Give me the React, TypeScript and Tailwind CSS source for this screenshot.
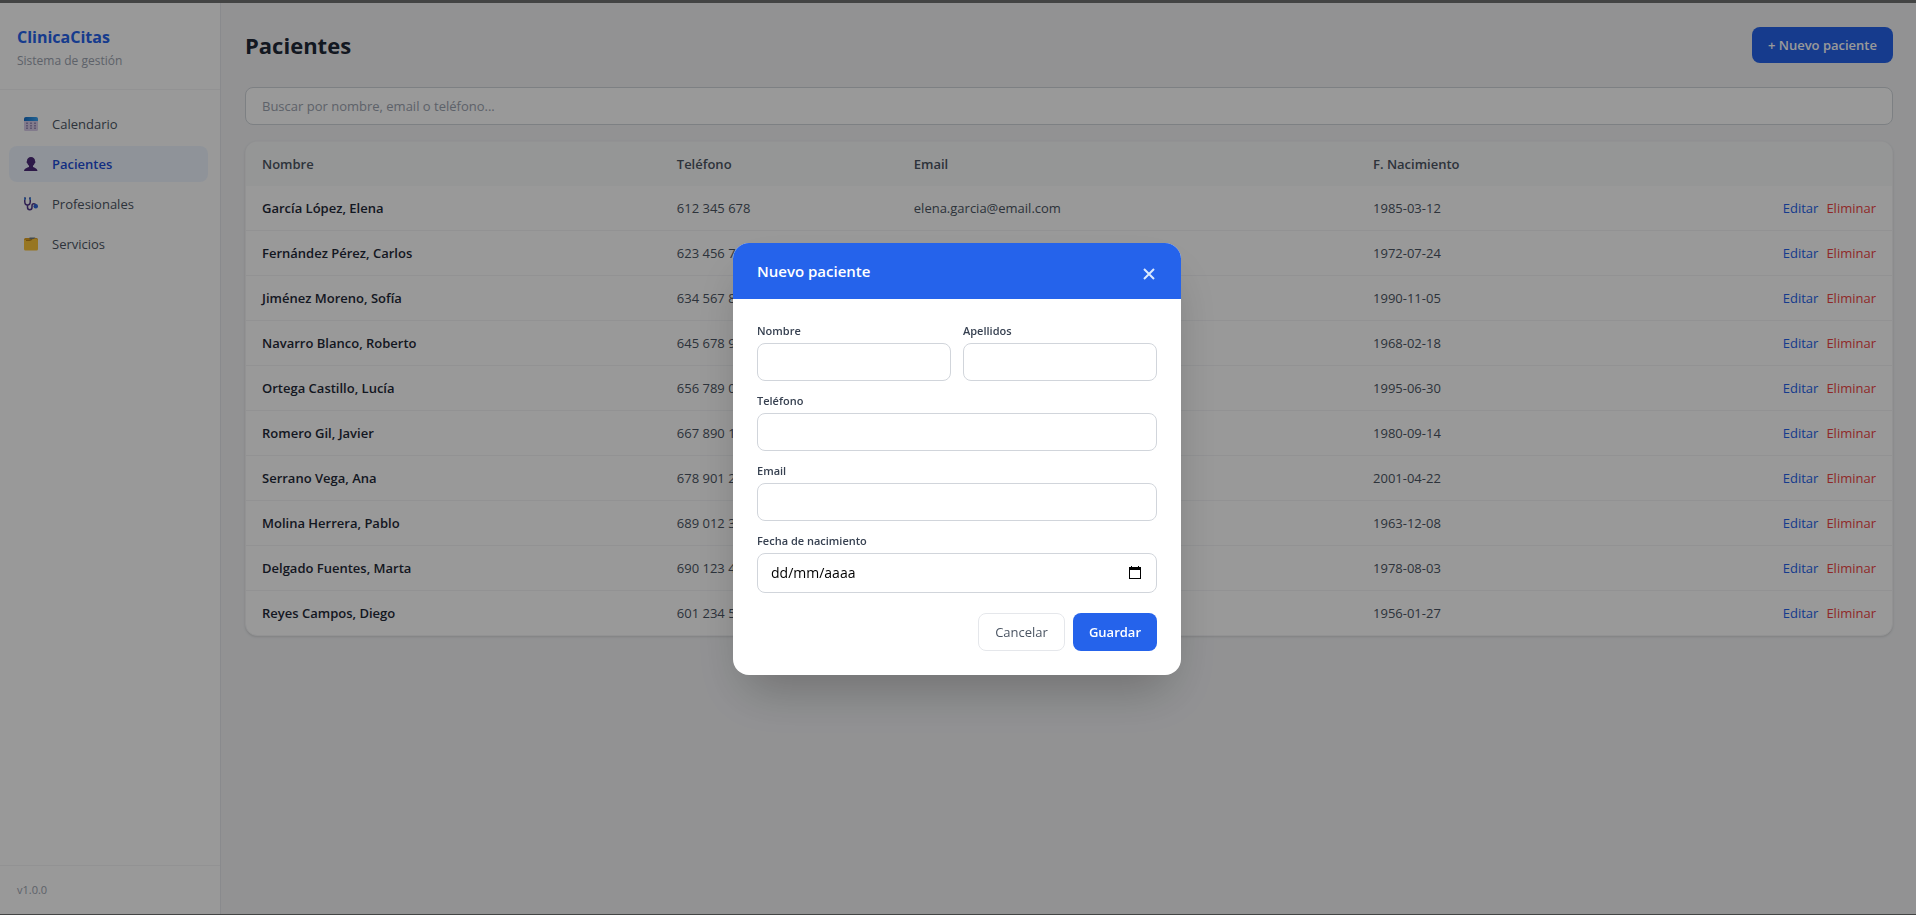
import React, { useState } from 'react';

interface Patient {
  id: number;
  name: string;
  phone: string;
  email: string;
  birth: string;
}

const patients: Patient[] = [
  { id: 1, name: 'García López, Elena', phone: '612 345 678', email: 'elena.garcia@email.com', birth: '1985-03-12' },
  { id: 2, name: 'Fernández Pérez, Carlos', phone: '623 456 789', email: 'carlos.f@email.com', birth: '1972-07-24' },
  { id: 3, name: 'Jiménez Moreno, Sofía', phone: '634 567 890', email: 'sofia.j@email.com', birth: '1990-11-05' },
  { id: 4, name: 'Navarro Blanco, Roberto', phone: '645 678 901', email: 'roberto.n@email.com', birth: '1968-02-18' },
  { id: 5, name: 'Ortega Castillo, Lucía', phone: '656 789 012', email: 'lucia.o@email.com', birth: '1995-06-30' },
  { id: 6, name: 'Romero Gil, Javier', phone: '667 890 123', email: 'javier.r@email.com', birth: '1980-09-14' },
  { id: 7, name: 'Serrano Vega, Ana', phone: '678 901 234', email: 'ana.s@email.com', birth: '2001-04-22' },
  { id: 8, name: 'Molina Herrera, Pablo', phone: '689 012 345', email: 'pablo.m@email.com', birth: '1963-12-08' },
  { id: 9, name: 'Delgado Fuentes, Marta', phone: '690 123 456', email: 'marta.d@email.com', birth: '1978-08-03' },
  { id: 10, name: 'Reyes Campos, Diego', phone: '601 234 567', email: 'diego.r@email.com', birth: '1956-01-27' },
];

function CalendarIcon() {
  return (
    <svg width="14" height="14" viewBox="0 0 28 28" aria-hidden="true">
      <defs>
        <linearGradient id="cal-top" x1="0" x2="1">
          <stop offset="0" stopColor="#1570c8" />
          <stop offset="1" stopColor="#3ba6f5" />
        </linearGradient>
      </defs>
      <rect x="0" y="1" width="28" height="27" rx="3" fill="#d9cdea" />
      <path d="M0 8V4a4 4 0 0 1 4-4h20a4 4 0 0 1 4 4v4z" fill="url(#cal-top)" />
      <g fill="#9c90bb">
        <rect x="4" y="11" width="4" height="3" />
        <rect x="12" y="11" width="4" height="3" />
        <rect x="20" y="11" width="4" height="3" />
        <rect x="4" y="16" width="4" height="3" />
        <rect x="12" y="16" width="4" height="3" />
        <rect x="20" y="16" width="4" height="3" />
        <rect x="4" y="21" width="4" height="3" />
        <rect x="12" y="21" width="4" height="3" />
        <rect x="20" y="21" width="4" height="3" />
      </g>
    </svg>
  );
}

function PersonIcon() {
  return (
    <svg width="14" height="14" viewBox="0 0 28 28" aria-hidden="true">
      <path
        d="M14 0C9 0 6 3.500 6 7.500c0 1-1 1.500-.8 3 .2 1.300 1.300 1.500 1.600 2.500.5 2 1.900 3.500 3.200 4.500v2c0 1.500-9.500 2-10 8.500h27c-.5-6.500-9-7-9-8.500v-2c1.300-1 2.700-2.500 3.200-4.500.3-1 1.400-1.200 1.600-2.500.2-1.500-.8-2-.8-3C22 3.500 19 0 14 0z"
        fill="#4b2a78"
      />
    </svg>
  );
}

function StethoscopeIcon() {
  return (
    <svg width="14" height="14" viewBox="0 0 28 28" fill="none" aria-hidden="true">
      <path d="M4 2.500H1.500V9c0 4 2.500 7 5.500 7s5.500-3 5.500-7V2.500H10" stroke="#51378a" strokeWidth="3" />
      <path
        d="M7 16v4.500c0 3.500 2 5 4.500 5s4.500-1.500 4.500-5v-3c0-2.500 1.500-4 3.500-4s4 1.500 4 4"
        stroke="#51378a"
        strokeWidth="3"
      />
      <path d="M1.500 1v5M12.500 1v5" stroke="#3a86e0" strokeWidth="3" />
      <circle cx="23.500" cy="18.500" r="4.500" fill="#2f63d8" />
    </svg>
  );
}

function FolderIcon() {
  return (
    <svg width="14" height="14" viewBox="0 0 28 28" aria-hidden="true">
      <path d="M0 5a3 3 0 0 1 3-3h22a3 3 0 0 1 3 3v18H0z" fill="#e0a022" />
      <path d="M11 1h12l-5 4h-7z" fill="#6f7a80" />
      <path d="M0 6h12c4 0 4-2 7-2h6a3 3 0 0 1 3 3v17a3 3 0 0 1-3 3H3a3 3 0 0 1-3-3z" fill="#fcc53a" />
      <path d="M4 7h8l4-2" stroke="#a86d0c" strokeWidth="1.500" fill="none" />
    </svg>
  );
}

const navItems = [
  { label: 'Calendario', icon: CalendarIcon, active: false },
  { label: 'Pacientes', icon: PersonIcon, active: true },
  { label: 'Profesionales', icon: StethoscopeIcon, active: false },
  { label: 'Servicios', icon: FolderIcon, active: false },
];

function Sidebar() {
  return (
    <aside className="flex w-[221px] shrink-0 flex-col border-r border-[#e5e7eb] bg-white">
      <div className="border-b border-[#f3f4f6] py-5 pl-[17px] pr-5">
        <div className="text-base font-bold leading-7 text-[#2563eb]">ClinicaCitas</div>
        <p className="mt-0.5 text-xs leading-4 text-[#9ca3af]">Sistema de gestión</p>
      </div>
      <nav className="flex flex-1 flex-col gap-1 py-4 pl-[9px] pr-3">
        {navItems.map(({ label, icon: Icon, active }) => (
          <a
            key={label}
            href="#"
            className={
              active
                ? 'flex items-center gap-3 rounded-lg bg-[#eff6ff] px-3 py-2 font-semibold text-[#1d4ed8]'
                : 'flex items-center gap-3 rounded-lg px-3 py-2 text-[#4b5563]'
            }
          >
            <span className="flex w-[19px] justify-center">
              <Icon />
            </span>
            {label}
          </a>
        ))}
      </nav>
      <div className="border-t border-[#f3f4f6] py-4 pl-[17px] pr-5 text-[11px] leading-4 text-[#9ca3af]">v1.0.0</div>
    </aside>
  );
}

function PatientsTable() {
  return (
    <div className="overflow-hidden rounded-xl border border-[#f3f4f6] bg-white shadow-sm">
      <table className="w-full table-fixed text-left">
        <thead className="bg-[#f9fafb] text-[#4b5563]">
          <tr>
            <th className="w-[25.2%] px-4 py-3 font-semibold">Nombre</th>
            <th className="w-[14.4%] px-4 py-3 font-semibold">Teléfono</th>
            <th className="w-[27.9%] px-4 py-3 font-semibold">Email</th>
            <th className="px-4 py-3 font-semibold">F. Nacimiento</th>
            <th className="px-4 py-3" />
          </tr>
        </thead>
        <tbody className="divide-y divide-[#f3f4f6]">
          {patients.map((p) => (
            <tr key={p.id} className="text-[#4b5563]">
              <td className="px-4 py-3 font-semibold text-[#1f2937]">{p.name}</td>
              <td className="px-4 py-3">{p.phone}</td>
              <td className="px-4 py-3">{p.email}</td>
              <td className="px-4 py-3">{p.birth}</td>
              <td className="px-4 py-3">
                <div className="flex justify-end gap-2">
                  <button type="button" className="text-[#2563eb]">
                    Editar
                  </button>
                  <button type="button" className="text-[#ef4444]">
                    Eliminar
                  </button>
                </div>
              </td>
            </tr>
          ))}
        </tbody>
      </table>
    </div>
  );
}

interface FieldProps {
  id: string;
  label: string;
  type?: string;
}

function Field({ id, label, type = 'text' }: FieldProps) {
  return (
    <div>
      <label htmlFor={id} className="mb-1 block text-[11px] font-semibold leading-4 text-[#374151]">
        {label}
      </label>
      <input id={id} type={type} className="block w-full rounded-lg border border-[#d1d5db] px-3 py-2" />
    </div>
  );
}

interface PatientModalProps {
  onClose: () => void;
}

function PatientModal({ onClose }: PatientModalProps) {
  return (
    <div className="fixed inset-x-0 bottom-px top-[3px] flex items-center justify-center bg-black/40 pr-0.5">
      <div
        role="dialog"
        aria-labelledby="modal-title"
        className="w-full max-w-md overflow-hidden rounded-2xl bg-white shadow-2xl"
      >
        <div className="flex h-14 items-center justify-between bg-[#2563eb] px-6 text-white">
          <h2 id="modal-title" className="text-[15px] font-semibold leading-6">
            Nuevo paciente
          </h2>
          <button type="button" aria-label="Cerrar" onClick={onClose} className="px-0.5 pb-0.5 pt-2 text-[#dbeafe]">
            <svg width="12" height="12" viewBox="0 0 12 12" stroke="currentColor" strokeWidth="2" aria-hidden="true">
              <path d="M1 1l10 10M11 1L1 11" />
            </svg>
          </button>
        </div>
        <form className="flex flex-col gap-3 p-6">
          <div className="grid grid-cols-2 gap-3">
            <Field id="nombre" label="Nombre" />
            <Field id="apellidos" label="Apellidos" />
          </div>
          <Field id="telefono" label="Teléfono" type="tel" />
          <Field id="email" label="Email" type="email" />
          <div>
            <label htmlFor="fecha" className="mb-1 block text-[11px] font-semibold leading-4 text-[#374151]">
              Fecha de nacimiento
            </label>
            <div className="flex h-10 items-center rounded-lg border border-[#d1d5db] pl-[13px] pr-[15px]">
              <input
                id="fecha"
                type="text"
                placeholder="dd/mm/aaaa"
                className="min-w-0 flex-1 text-sm outline-none placeholder:text-black"
              />
              <button type="button" aria-label="Abrir calendario">
                <svg width="12" height="13" viewBox="0 0 12 13" aria-hidden="true">
                  <path d="M2 0h1v1h6V0h1v1h2v12H0V1h2zM1 4v8h10V4z" fill="#000" fillRule="evenodd" />
                </svg>
              </button>
            </div>
          </div>
          <div className="flex justify-end gap-2 pt-2">
            <button
              type="button"
              onClick={onClose}
              className="rounded-lg border border-[#e5e7eb] px-4 py-2 text-[#4b5563]"
            >
              Cancelar
            </button>
            <button type="submit" className="rounded-lg bg-[#2563eb] px-4 py-2 font-semibold text-white">
              Guardar
            </button>
          </div>
        </form>
      </div>
    </div>
  );
}

function App() {
  const [showModal, setShowModal] = useState(true);
  return (
    <div className="flex min-h-screen border-b border-t-[3px] border-[#434444] bg-[#f3f4f6] font-['Open_Sans',sans-serif] text-[13px] leading-5 text-[#1f2937]">
      <Sidebar />
      <main className="min-w-0 flex-1 py-6 pl-6 pr-[23px]">
        <div className="mb-6 flex items-center justify-between">
          <h1 className="text-[22px] font-bold leading-8">Pacientes</h1>
          <button
            type="button"
            onClick={() => setShowModal(true)}
            className="rounded-lg bg-[#2563eb] px-4 py-2 font-semibold text-white"
          >
            + Nuevo paciente
          </button>
        </div>
        <input
          type="text"
          aria-label="Buscar paciente"
          placeholder="Buscar por nombre, email o teléfono..."
          className="mb-4 block w-full rounded-lg border border-[#d1d5db] bg-white px-4 py-2 placeholder:text-[#9ca3af]"
        />
        <PatientsTable />
      </main>
      {showModal && <PatientModal onClose={() => setShowModal(false)} />}
    </div>
  );
}

export default App;
